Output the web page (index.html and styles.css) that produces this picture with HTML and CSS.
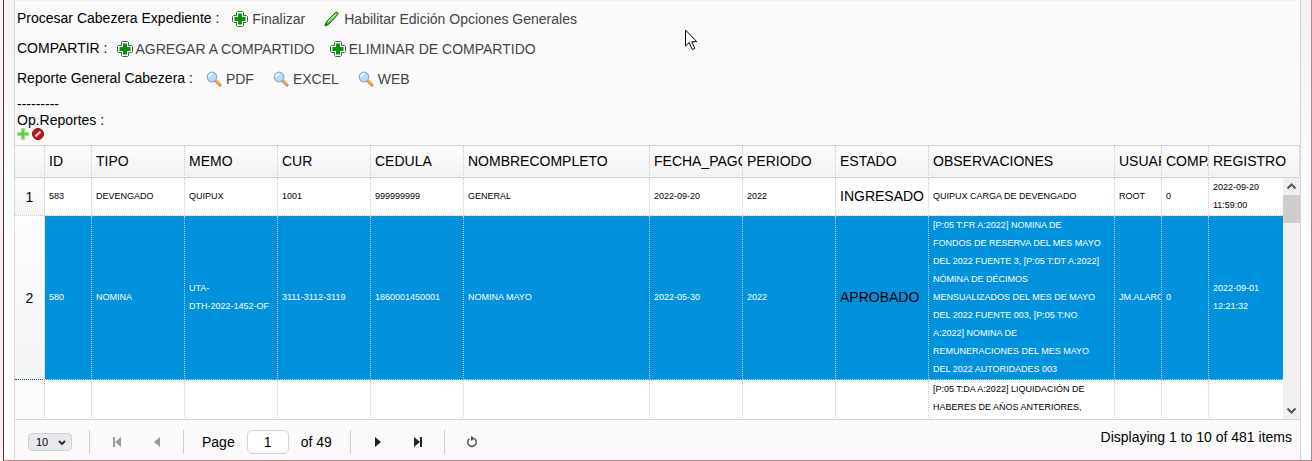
FILE: index.html
```html
<!DOCTYPE html>
<html lang="es">
<head>
<meta charset="utf-8">
<title>Expedientes</title>
<link rel="stylesheet" href="styles.css">
</head>
<body>
<svg class="defs" aria-hidden="true">
  <symbol id="plus" viewBox="0 0 16 16">
    <path d="M5.500.5h5l1 1v3h3l1 1v5l-1 1h-3v3l-1 1h-5l-1-1v-3h-3l-1-1v-5l1-1h3v-3z" fill="#fff" stroke="#2f6b3c"/>
    <path d="M6 2.500h4V6h3.500v4H10v3.500H6V10H2.500V6H6z" fill="#0c8f0c"/>
  </symbol>
  <symbol id="pencil" viewBox="0 0 16 16">
    <path d="M1 15l1.500-4.500L11.500 1.500q1-.8 2 .1t.2 2L5 13z" fill="#4cb83a" stroke="#1f641c"/>
    <path d="M4 11l8-8" stroke="#b9f093" stroke-width="1.500"/>
    <path d="M1 15l1-3 2 2z" fill="#234f20"/>
  </symbol>
  <symbol id="lens" viewBox="0 0 16 16">
    <path d="M10 10l4 4" stroke="#c47b22" stroke-width="3" stroke-linecap="round"/>
    <path d="M10.500 10l3.500 3.500" stroke="#ffb552" stroke-width="1.500" stroke-linecap="round"/>
    <circle cx="6" cy="6" r="4.800" fill="#b4dcfb" stroke="#8ca9d6" stroke-width="1.200"/>
    <path d="M3 6q.3-3 3.500-3" stroke="#f2faff" stroke-width="1.800" fill="none"/>
  </symbol>
</svg>
<main class="frame">
  <section class="panel">
    <div class="toolbar">
      <div class="tools"><span class="label">Procesar Cabezera Expediente :</span>
        <button class="tool"><svg><use href="#plus"/></svg>Finalizar</button>
        <button class="tool"><svg><use href="#pencil"/></svg>Habilitar Edición Opciones Generales</button></div>
      <div class="tools compact"><span class="label">COMPARTIR :</span>
        <button class="tool"><svg><use href="#plus"/></svg>AGREGAR A COMPARTIDO</button>
        <button class="tool"><svg><use href="#plus"/></svg>ELIMINAR DE COMPARTIDO</button></div>
      <div class="tools"><span class="label">Reporte General Cabezera :</span>
        <button class="tool"><svg><use href="#lens"/></svg>PDF</button>
        <button class="tool"><svg><use href="#lens"/></svg>EXCEL</button>
        <button class="tool"><svg><use href="#lens"/></svg>WEB</button></div>
      <div class="reports">---------<br>Op.Reportes :</div>
      <div class="mini">
        <button aria-label="Agregar"><svg viewBox="0 0 12 12"><path d="M4.500.5h3v4h4v3h-4v4h-3v-4h-4v-3h4z" fill="#83d957" stroke="#a2d98c"/><path d="M6 2v8M2 6h8" stroke="#62c33b" stroke-width="1.500"/></svg></button>
        <button aria-label="Cancelar"><svg viewBox="0 0 12 12"><circle cx="6" cy="6" r="5.500" fill="#d90d0d" stroke="#930c0c"/><path d="M3.500 8.300l5-4.500" stroke="#fff" stroke-width="2"/></svg></button>
      </div>
    </div>

    <table class="grid head">
      <colgroup><col class="c-num"><col class="c-s"><col class="c-m"><col class="c-m"><col class="c-m"><col class="c-m"><col class="c-l"><col class="c-m"><col class="c-m"><col class="c-m"><col class="c-l"><col class="c-s"><col class="c-s"><col></colgroup>
      <thead><tr><th></th><th>ID</th><th>TIPO</th><th>MEMO</th><th>CUR</th><th>CEDULA</th><th>NOMBRECOMPLETO</th><th>FECHA_PAGO</th><th>PERIODO</th><th>ESTADO</th><th>OBSERVACIONES</th><th>USUARIO</th><th>COMPARTIDO</th><th>REGISTRO</th></tr></thead>
    </table>

    <div class="body">
      <div class="view">
        <table class="grid rows">
          <colgroup><col class="c-num"><col class="c-s"><col class="c-m"><col class="c-m"><col class="c-m"><col class="c-m"><col class="c-l"><col class="c-m"><col class="c-m"><col class="c-m"><col class="c-l"><col class="c-s"><col class="c-s"><col></colgroup>
          <tbody>
            <tr><td class="num">1</td><td>583</td><td>DEVENGADO</td><td>QUIPUX</td><td>1001</td><td>999999999</td><td>GENERAL</td><td>2022-09-20</td><td>2022</td><td class="state">INGRESADO</td><td>QUIPUX CARGA DE DEVENGADO</td><td class="clip">ROOT</td><td>0</td><td>2022-09-20 11:59:00</td></tr>
            <tr class="selected"><td class="num">2</td><td>580</td><td>NOMINA</td><td>UTA-<br>DTH-2022-1452-OF</td><td>3111-3112-3119</td><td>1860001450001</td><td>NOMINA MAYO</td><td>2022-05-30</td><td>2022</td><td class="state">APROBADO</td><td>[P:05 T:FR A:2022] NOMINA DE<br>FONDOS DE RESERVA DEL MES MAYO<br>DEL 2022 FUENTE 3, [P:05 T:DT A:2022]<br>NÓMINA DE DÉCIMOS<br>MENSUALIZADOS DEL MES DE MAYO<br>DEL 2022 FUENTE 003, [P:05 T:NO<br>A:2022] NOMINA DE<br>REMUNERACIONES DEL MES MAYO<br>DEL 2022 AUTORIDADES 003</td><td class="clip">JM.ALARCON</td><td>0</td><td>2022-09-01 12:21:32</td></tr>
            <tr class="tall"><td class="num"></td><td></td><td></td><td></td><td></td><td></td><td></td><td></td><td></td><td></td><td>[P:05 T:DA A:2022] LIQUIDACIÓN DE<br>HABERES DE AÑOS ANTERIORES,</td><td></td><td></td><td></td></tr>
          </tbody>
        </table>
      </div>
      <div class="scroll">
        <button aria-label="Subir"><svg viewBox="0 0 17 17"><path d="M4.500 10.500l4-4 4 4" fill="none" stroke="#555" stroke-width="2"/></svg></button>
        <div class="thumb"></div>
        <button aria-label="Bajar"><svg viewBox="0 0 17 17"><path d="M4.500 6.500l4 4 4-4" fill="none" stroke="#555" stroke-width="2"/></svg></button>
      </div>
    </div>

    <footer class="pager">
      <div class="size"><select aria-label="Filas por página"><option>10</option></select><svg viewBox="0 0 8 6"><path d="M1 1l3 3 3-3" fill="none" stroke="#222" stroke-width="1.800"/></svg></div>
      <i class="sep"></i>
      <button class="nav off" aria-label="Primera"><svg viewBox="0 0 12 12"><path d="M2 1h2v10H2zM10 1v10L4 6z"/></svg></button>
      <button class="nav off" aria-label="Anterior"><svg viewBox="0 0 12 12"><path d="M9 1v10L3 6z"/></svg></button>
      <i class="sep"></i>
      <label class="page" for="page">Page</label>
      <input id="page" value="1">
      <span class="of">of 49</span>
      <i class="sep"></i>
      <button class="nav" aria-label="Siguiente"><svg viewBox="0 0 12 12"><path d="M3 1v10l6-5z"/></svg></button>
      <button class="nav" aria-label="Última"><svg viewBox="0 0 12 12"><path d="M2 1v10l6-5zM8 1h2v10H8z"/></svg></button>
      <i class="sep"></i>
      <button class="nav" aria-label="Recargar"><svg viewBox="0 0 12 12"><path d="M3.300 2.800a4.300 4.300 0 1 0 5.400 0" fill="none" stroke="#555" stroke-width="1.500"/><path d="M5 0l4 2.500L5 5z" fill="#555"/></svg></button>
      <span class="info">Displaying 1 to 10 of 481 items</span>
    </footer>
  </section>
</main>
<svg class="cursor" viewBox="0 0 13 22" aria-hidden="true"><path d="M.5 1v16l3.700-3.500 3 7 2.600-1.200-3-6.600h5z" fill="#fff" stroke="#000"/></svg>
</body>
</html>
```
FILE: styles.css
```css
* { box-sizing: border-box; }
body {
  margin: 0;
  height: 100vh;
  display: flex;
  padding-left: 3px;
  background: #f7f7f7;
  color: #000;
  font: 14px/16px "Liberation Sans", Arial, sans-serif;
}
button {
  font: inherit;
  border: 0;
  padding: 0;
  background: none;
  color: inherit;
}
svg { display: block; }
.defs { position: absolute; width: 0; height: 0; }
.frame {
  flex: 1;
  min-width: 0;
  display: flex;
  padding: 0 10px;
  border: solid #c67f84;
  border-width: 0 1px 1px;
  border-left-color: #8c1c24;
  background: linear-gradient(#f2f2f2, #fff 240px);
}
.panel {
  flex: 1;
  min-width: 0;
  display: flex;
  flex-direction: column;
  border: solid #d4d4d4;
  border-width: 0 1px;
  background: #fafafa;
}
.toolbar {
  padding: 3px 2px 5px;
  border-top: 1px solid #f2f2f2;
  border-bottom: 1px solid #d4d4d4;
}
.tools { display: flex; align-items: center; height: 30px; gap: 19px; }
.tools.compact { gap: 15px; }
.tools .label { margin-right: -6px; padding-bottom: 2px; }
.tool { display: flex; align-items: center; gap: 4px; color: #444; }
.compact .tool { gap: 3px; }
.tool svg { width: 16px; height: 16px; }
.reports { padding-top: 2px; }
.mini { display: flex; gap: 3px; }
.mini svg { width: 12px; height: 12px; }

.grid { width: 100%; table-layout: fixed; border-collapse: separate; border-spacing: 0; }
.c-num { width: 30px; }
.c-s { width: 47px; }
.c-m { width: 93px; }
.c-l { width: 186px; }
.head { background: linear-gradient(#fcfcfc, #f2f2f2); }
.head th {
  height: 32px;
  padding: 0 0 2px 4px;
  border-right: 1px dotted #ccc;
  border-bottom: 1px solid #d4d4d4;
  font-weight: normal;
  text-align: left;
  white-space: nowrap;
  overflow: hidden;
}
.body { flex: 1; min-height: 0; display: flex; border-bottom: 1px solid #d4d4d4; background: #fff; }
.view { flex: 1; min-width: 0; overflow: hidden; }
.rows td {
  padding: 0 4px 1px;
  border-right: 1px dotted #ccc;
  border-bottom: 1px dotted #ccc;
  font-size: 9px;
  line-height: 18px;
}
.rows td:last-child { border-right: 0; }
.rows .clip { padding-right: 0; overflow: hidden; white-space: nowrap; }
.rows .state { padding-right: 0; font-size: 14px; }
.rows .num { padding: 0; background: linear-gradient(#fdfdfd, #f4f4f4); font-size: 14px; text-align: center; }
.selected td { background: #0092dc; color: #fff; }
.selected .state { color: #000; }
.selected .num { color: #000; border-bottom-color: #05537c; }
.tall td { height: 164px; vertical-align: top; }
.scroll { width: 17px; display: flex; flex-direction: column; background: #f0f0f0; }
.scroll svg { width: 17px; height: 17px; }
.thumb { height: 28px; margin-bottom: auto; background: #cdcdcd; }

.pager { display: flex; align-items: center; height: 40px; padding: 4px 8px 0 13px; }
.size { position: relative; margin-right: 17px; }
.size select {
  display: block;
  width: 44px;
  height: 18px;
  padding: 0 7px;
  appearance: none;
  border: 1px solid #cfcfd8;
  border-radius: 4px;
  background: #e9e9ed;
  font: 11px "Liberation Sans", Arial, sans-serif;
}
.size svg { position: absolute; right: 6px; top: 7px; width: 8px; height: 6px; pointer-events: none; }
.sep { width: 1px; height: 24px; background: #ccc; }
.nav { margin: 0 14px; padding: 0 7px; fill: #222; }
.nav + .nav { margin-left: 0; margin-right: 13px; }
.nav.off { fill: #999; }
.nav svg { width: 12px; height: 12px; }
.page { margin: 0 12px 0 18px; }
.pager input {
  width: 42px;
  height: 24px;
  padding: 0;
  border: 1px solid #d4d4d4;
  border-radius: 5px;
  background: #fff;
  font: 14px "Liberation Sans", Arial, sans-serif;
  text-align: center;
}
.of { margin: 0 18px 0 12px; }
.info { align-self: flex-start; margin-left: auto; padding-top: 5px; }
.cursor { position: absolute; left: 685px; top: 29px; width: 13px; height: 22px; }
```
